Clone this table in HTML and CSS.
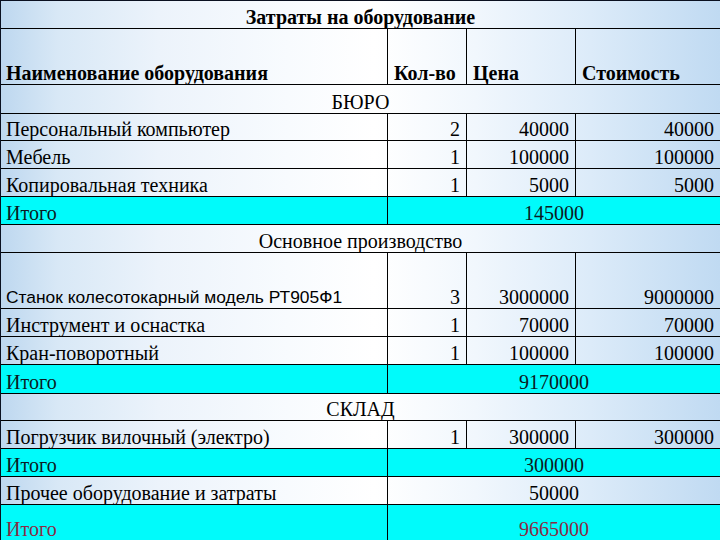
FILE: index.html
```html
<!DOCTYPE html>
<html lang="ru">
<head>
<meta charset="utf-8">
<title>Затраты на оборудование</title>
<link rel="stylesheet" href="styles.css">
</head>
<body>
<div class="sheet">
  <div class="row r-title"><div class="cell span-all center bold">Затраты на оборудование</div></div>
  <div class="row r-head">
    <div class="cell bold">Наименование оборудования</div>
    <div class="cell bold vl">Кол-во</div>
    <div class="cell bold vl">Цена</div>
    <div class="cell bold vl">Стоимость</div>
  </div>
  <div class="row r-29"><div class="cell span-all center">БЮРО</div></div>
  <div class="row r-27">
    <div class="cell">Персональный компьютер</div>
    <div class="cell vl num">2</div>
    <div class="cell vl num">40000</div>
    <div class="cell vl num">40000</div>
  </div>
  <div class="row">
    <div class="cell">Мебель</div>
    <div class="cell vl num">1</div>
    <div class="cell vl num">100000</div>
    <div class="cell vl num">100000</div>
  </div>
  <div class="row">
    <div class="cell">Копировальная техника</div>
    <div class="cell vl num">1</div>
    <div class="cell vl num">5000</div>
    <div class="cell vl num">5000</div>
  </div>
  <div class="row total">
    <div class="cell">Итого</div>
    <div class="cell vl span-rest center">145000</div>
  </div>
  <div class="row"><div class="cell span-all center">Основное производство</div></div>
  <div class="row r-head">
    <div class="cell sans">Станок колесотокарный модель РТ905Ф1</div>
    <div class="cell vl num">3</div>
    <div class="cell vl num">3000000</div>
    <div class="cell vl num">9000000</div>
  </div>
  <div class="row">
    <div class="cell">Инструмент и оснастка</div>
    <div class="cell vl num">1</div>
    <div class="cell vl num">70000</div>
    <div class="cell vl num">70000</div>
  </div>
  <div class="row">
    <div class="cell">Кран-поворотный</div>
    <div class="cell vl num">1</div>
    <div class="cell vl num">100000</div>
    <div class="cell vl num">100000</div>
  </div>
  <div class="row total r-29">
    <div class="cell">Итого</div>
    <div class="cell vl span-rest center">9170000</div>
  </div>
  <div class="row r-27"><div class="cell span-all center">СКЛАД</div></div>
  <div class="row">
    <div class="cell">Погрузчик вилочный (электро)</div>
    <div class="cell vl num">1</div>
    <div class="cell vl num">300000</div>
    <div class="cell vl num">300000</div>
  </div>
  <div class="row total">
    <div class="cell">Итого</div>
    <div class="cell vl span-rest center">300000</div>
  </div>
  <div class="row">
    <div class="cell">Прочее оборудование и затраты</div>
    <div class="cell vl span-rest center">50000</div>
  </div>
  <div class="row total grand">
    <div class="cell">Итого</div>
    <div class="cell vl span-rest center">9665000</div>
  </div>
</div>
</body>
</html>
```

FILE: styles.css
```css
html, body {
  margin: 0;
  padding: 0;
}
body {
  width: 720px;
  height: 540px;
  overflow: hidden;
  background: linear-gradient(90deg, #bdd7ef 0%, #d8e8f6 8%, #ecf3fb 22%, #f8fbfe 40%, #ffffff 52%, #f1f7fd 66%, #dcebf9 82%, #c0daf2 100%);
}
.sheet {
  width: 720px;
  height: 540px;
  box-sizing: border-box;
  border-left: 1px solid #0a1020;
  border-top: 1px solid #0a1020;
  font-family: "Liberation Serif", "Times New Roman", serif;
  font-size: 20px;
  color: #000;
}
.row {
  display: grid;
  grid-template-columns: 386px 79px 109px 145px;
  height: 28px;
  box-sizing: border-box;
  border-bottom: 1px solid #000;
}
.r-title { height: 28px; }
.r-head { height: 56px; }
.r-29 { height: 29px; }
.r-27 { height: 27px; }
.cell {
  display: flex;
  align-items: flex-end;
  padding: 0 5px 1px 5px;
  line-height: 20px;
  white-space: nowrap;
  overflow: hidden;
  min-width: 0;
}
.vl { border-left: 1px solid #000; padding-left: 6px; }
.num { justify-content: flex-end; padding-right: 6px; }
.center { justify-content: center; padding-left: 0; padding-right: 0; }
.span-all { grid-column: 1 / -1; }
.span-rest { grid-column: 2 / -1; }
.bold { font-weight: bold; }
.sans {
  font-family: "Liberation Sans", Arial, sans-serif;
  font-size: 17.4px;
}
.total { background: #00fbfb; color: #0b1a22; }
.grand { height: 40px; color: #8a2a44; }
.grand .cell { padding-bottom: 5px; }
```
